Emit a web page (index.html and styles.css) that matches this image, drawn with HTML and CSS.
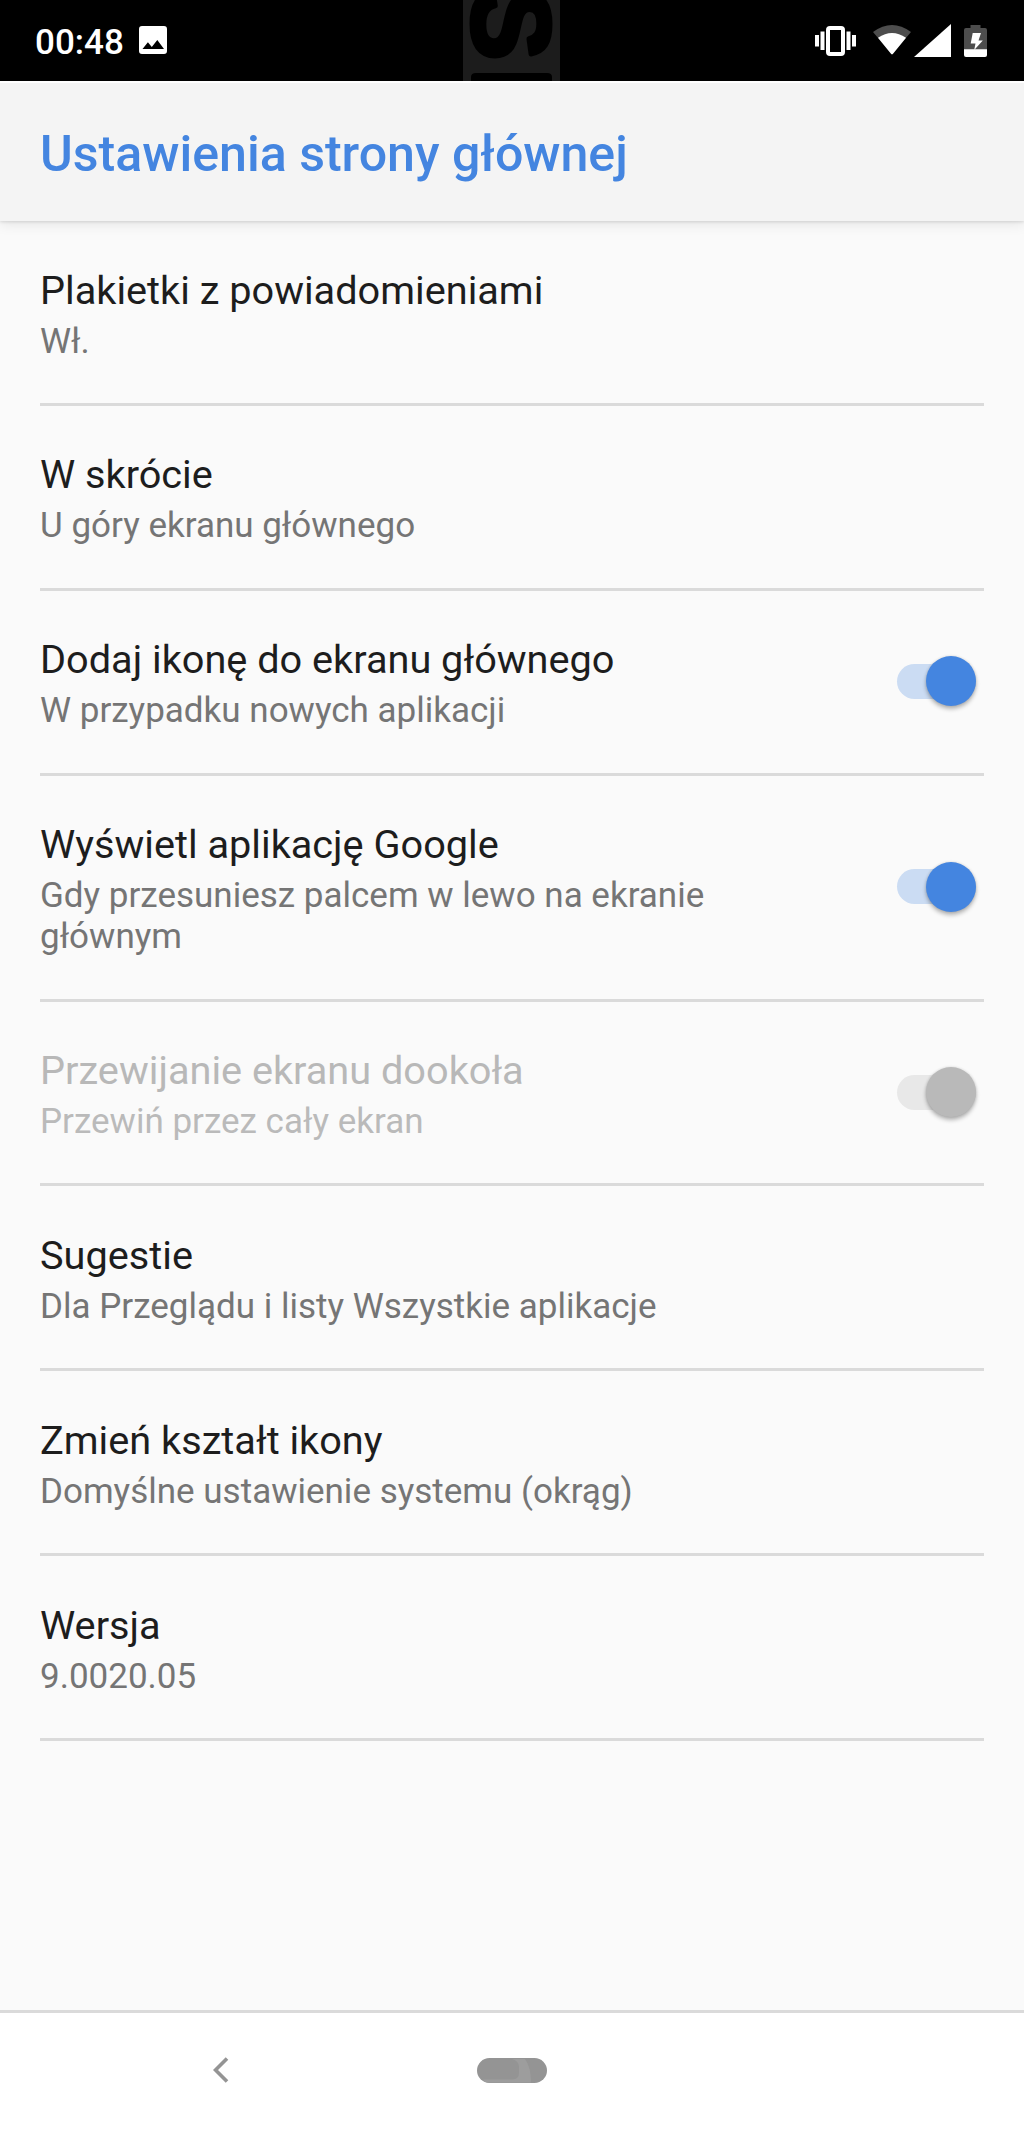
FILE: index.html
```html
<!DOCTYPE html>
<html lang="pl">
<head>
<meta charset="utf-8">
<title>Ustawienia strony głównej</title>
<link rel="stylesheet" href="styles.css">
</head>
<body>
<div class="status-bar">
    <span class="clock">00:48</span>
    <svg class="icon-picture" width="28" height="28" viewBox="0 0 28 28">
        <path fill="#fff" fill-rule="evenodd" d="M3 0h22a3 3 0 0 1 3 3v22a3 3 0 0 1-3 3H3a3 3 0 0 1-3-3V3a3 3 0 0 1 3-3zM3.5 23h21.500l-6.700-9-5.500 7-3.900-4.700z"/>
    </svg>
    <svg class="watermark" width="97" height="81" viewBox="0 0 97 81">
        <rect width="97" height="81" fill="#1c1c1c"/>
        <text class="watermark-text" transform="translate(9.500 -12.500) rotate(90)">S</text>
        <path d="M8 81v-4q0-4 5-4h71q5 0 5 4v4z"/>
    </svg>
    <div class="status-icons">
        <svg class="icon-vibrate" width="41" height="30" viewBox="0 0 41 30">
            <path fill="#fff" d="M0 9h4v11.500H0zM5.500 5.500h4v18.500h-4zM31.500 5.500h4v18.500h-4zM37 9h4v11.500h-4z"/>
            <rect x="13" y="2" width="15" height="26" rx="2" fill="none" stroke="#fff" stroke-width="4"/>
        </svg>
        <svg class="icon-wifi" width="38" height="30" viewBox="0 0 38 30">
            <path fill="#4d4d4d" d="M0 7Q19-7 38 7L19 29.500z"/>
            <path fill="#fff" d="M5 12.800Q19 3 33 12.800L20 28.800q-1 1-2 0z"/>
        </svg>
        <svg class="icon-signal" width="37" height="33" viewBox="0 0 37 33">
            <path fill="#fff" d="M37 0v33H0z"/>
        </svg>
        <svg class="icon-battery" width="23" height="32" viewBox="0 0 23 32">
            <path fill="#4d4d4d" d="M6.500 0h10v3H21a2 2 0 0 1 2 2v20H0V5a2 2 0 0 1 2-2h4.500z"/>
            <path fill="#fff" d="M0 24.300h23V30a2 2 0 0 1-2 2H2a2 2 0 0 1-2-2z"/>
            <path fill="#fff" d="M8.700 8H17l-2.500 7.500h4.300L10.200 25l1.300-6.500H6.700z"/>
        </svg>
    </div>
</div>

<header class="app-bar">
    <h1>Ustawienia strony głównej</h1>
</header>

<main class="settings">
    <div class="row">
        <div class="text">
            <div class="title">Plakietki z powiadomieniami</div>
            <div class="summary">Wł.</div>
        </div>
    </div>
    <div class="row">
        <div class="text">
            <div class="title">W skrócie</div>
            <div class="summary">U góry ekranu głównego</div>
        </div>
    </div>
    <div class="row">
        <div class="text">
            <div class="title">Dodaj ikonę do ekranu głównego</div>
            <div class="summary">W przypadku nowych aplikacji</div>
        </div>
        <div class="switch"><div class="thumb"></div></div>
    </div>
    <div class="row">
        <div class="text">
            <div class="title">Wyświetl aplikację Google</div>
            <div class="summary">Gdy przesuniesz palcem w lewo na ekranie głównym</div>
        </div>
        <div class="switch"><div class="thumb"></div></div>
    </div>
    <div class="row disabled">
        <div class="text">
            <div class="title">Przewijanie ekranu dookoła</div>
            <div class="summary">Przewiń przez cały ekran</div>
        </div>
        <div class="switch"><div class="thumb"></div></div>
    </div>
    <div class="row">
        <div class="text">
            <div class="title">Sugestie</div>
            <div class="summary">Dla Przeglądu i listy Wszystkie aplikacje</div>
        </div>
    </div>
    <div class="row">
        <div class="text">
            <div class="title">Zmień kształt ikony</div>
            <div class="summary">Domyślne ustawienie systemu (okrąg)</div>
        </div>
    </div>
    <div class="row">
        <div class="text">
            <div class="title">Wersja</div>
            <div class="summary">9.0020.05</div>
        </div>
    </div>
</main>

<nav class="nav-bar">
    <svg class="back" width="16" height="26" viewBox="0 0 16 26">
        <path d="M14 1.500L2.500 13 14 24.500" fill="none" stroke="#949494" stroke-width="3.600"/>
    </svg>
    <svg class="home" width="70" height="25" viewBox="0 0 70 25">
        <rect width="70" height="25" rx="12.500" fill="#949494"/>
        <path fill="#9d9d9d" d="M35 1h13q6 8 6 23.500H12q-5 0-6-3h29q7 0 7-7V9q0-6-7-8z"/>
    </svg>
</nav>
</body>
</html>
```
FILE: styles.css
```css
* {
    box-sizing: border-box;
}
body {
    margin: 0;
    height: 2130px;
    display: flex;
    flex-direction: column;
    background: #fafafa;
    font-family: Roboto, sans-serif;
}
svg {
    display: block;
    flex: none;
}
.status-bar {
    position: relative;
    display: flex;
    align-items: flex-start;
    height: 81px;
    padding: 0 37px 0 35px;
    background: #000;
    color: #fff;
}
.clock {
    margin-top: 22px;
    width: 104px;
    font-size: 35px;
    font-weight: 500;
    line-height: 41px;
}
.icon-picture {
    margin-top: 26px;
}
.watermark {
    position: absolute;
    left: 463px;
    top: 0;
}
.watermark-text {
    font: bold 109px "Liberation Sans", sans-serif;
    stroke: #000;
    stroke-width: 5px;
    stroke-linejoin: round;
}
.status-icons {
    display: flex;
    margin-left: auto;
}
.icon-vibrate {
    margin: 26px 17px 0 0;
}
.icon-wifi {
    margin: 25px 3px 0 0;
}
.icon-signal {
    margin: 24px 13px 0 0;
}
.icon-battery {
    margin-top: 25px;
}
.app-bar {
    height: 140px;
    padding: 42px 40px 0;
    background: #f4f4f4;
    border-top: 2px solid #fff;
    box-shadow: 0 1px 3px rgba(0,0,0,0.12), 0 4px 12px rgba(0,0,0,0.08);
}
h1 {
    margin: 0;
    font-size: 50.1px;
    font-weight: 500;
    line-height: 58px;
    color: #4485e0;
}
.settings {
    flex: 1;
    padding: 0 40px;
}
.row {
    display: flex;
    align-items: center;
    justify-content: space-between;
    padding: 45.6px 8px 41.3px 0;
    border-bottom: 3px solid #dadada;
}
.text {
    max-width: 720px;
}
.title {
    margin-bottom: 7px;
    font-size: 39.7px;
    line-height: 47px;
    color: #1d1d1d;
}
.summary {
    font-size: 35px;
    line-height: 41px;
    color: #757575;
}
.switch {
    display: flex;
    align-items: center;
    justify-content: flex-end;
    flex: none;
    width: 79px;
    height: 35px;
    margin-top: -5px;
    border-radius: 18px;
    background: #cbdcf3;
}
.thumb {
    flex: none;
    width: 50px;
    height: 50px;
    border-radius: 50%;
    background: #4485e0;
    box-shadow: 0 3px 4px rgba(0,0,0,0.28), 0 0 3px rgba(0,0,0,0.12);
}
.disabled .title {
    color: #b8b8b8;
}
.disabled .summary {
    color: #bababa;
}
.disabled .switch {
    background: #e8e8e8;
}
.disabled .thumb {
    background: #b9b9b9;
}
.nav-bar {
    display: flex;
    align-items: center;
    height: 120px;
    padding: 0 0 3px 213px;
    border-top: 3px solid #dadada;
    background: #fff;
}
.home {
    margin-left: 248px;
}
```
